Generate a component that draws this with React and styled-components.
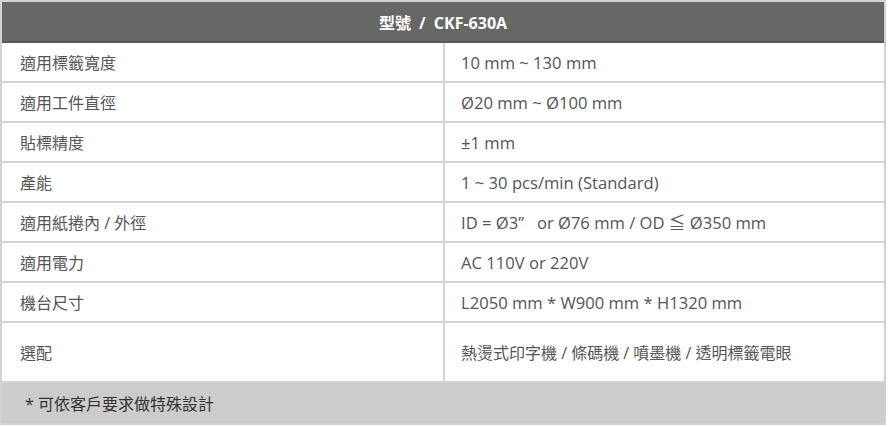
import React from 'react';
import styled, { createGlobalStyle } from 'styled-components';

const Global = createGlobalStyle`
  body {
    margin: 0;
    background: #fff;
    font-family: "Open Sans", "Noto Sans CJK TC", sans-serif;
  }
`;

const Table = styled.div`
  width: 886px;
  box-sizing: border-box;
  border: 2px solid #d2d2d2;
  display: flex;
  flex-direction: column;
`;

const Head = styled.div`
  height: 39px;
  background: #666866;
  border-bottom: 2px solid #575957;
  display: flex;
  align-items: center;
  justify-content: center;
  color: #fff;
  font-weight: 700;
  font-size: 16px;
  word-spacing: 4px;
`;

const Row = styled.div`
  display: grid;
  grid-template-columns: 441px 441px;
  height: ${p => p.$tall ? 58 : 38}px;
  border-bottom: 2px solid #d4d4d4;
`;

const Cell = styled.div`
  display: flex;
  align-items: center;
  padding-left: ${p => p.$value ? 16 : 18}px;
  font-size: 16px;
  color: #555555;
  border-left: ${p => p.$value ? '2px solid #d4d4d4' : 'none'};
  white-space: nowrap;
`;

const Latin = styled.span`
  font-size: 16.6px;
`;

const Foot = styled.div`
  height: 40px;
  background: #cccccc;
  display: flex;
  align-items: center;
  padding-left: 23px;
  font-size: 16px;
  color: #333;
`;

const specs = [
  ['適用標籤寬度', '10 mm ~ 130 mm'],
  ['適用工件直徑', 'Ø20 mm ~ Ø100 mm'],
  ['貼標精度', '±1 mm'],
  ['產能', '1 ~ 30 pcs/min (Standard)'],
  ['適用紙捲內 / 外徑', 'ID = Ø3”\u00a0\u00a0 or Ø76 mm / OD ≦ Ø350 mm'],
  ['適用電力', 'AC 110V or 220V'],
  ['機台尺寸', 'L2050 mm * W900 mm * H1320 mm'],
  ['選配', '熱燙式印字機 / 條碼機 / 噴墨機 / 透明標籤電眼', true],
];

export default function App() {
  return (
    <>
      <Global />
      <Table>
        <Head>型號 / CKF-630A</Head>
        {specs.map(([k, v, tall]) => (
          <Row key={k} $tall={tall}>
            <Cell>{k}</Cell>
            <Cell $value>{tall ? v : <Latin>{v}</Latin>}</Cell>
          </Row>
        ))}
        <Foot>* 可依客戶要求做特殊設計</Foot>
      </Table>
    </>
  );
}
